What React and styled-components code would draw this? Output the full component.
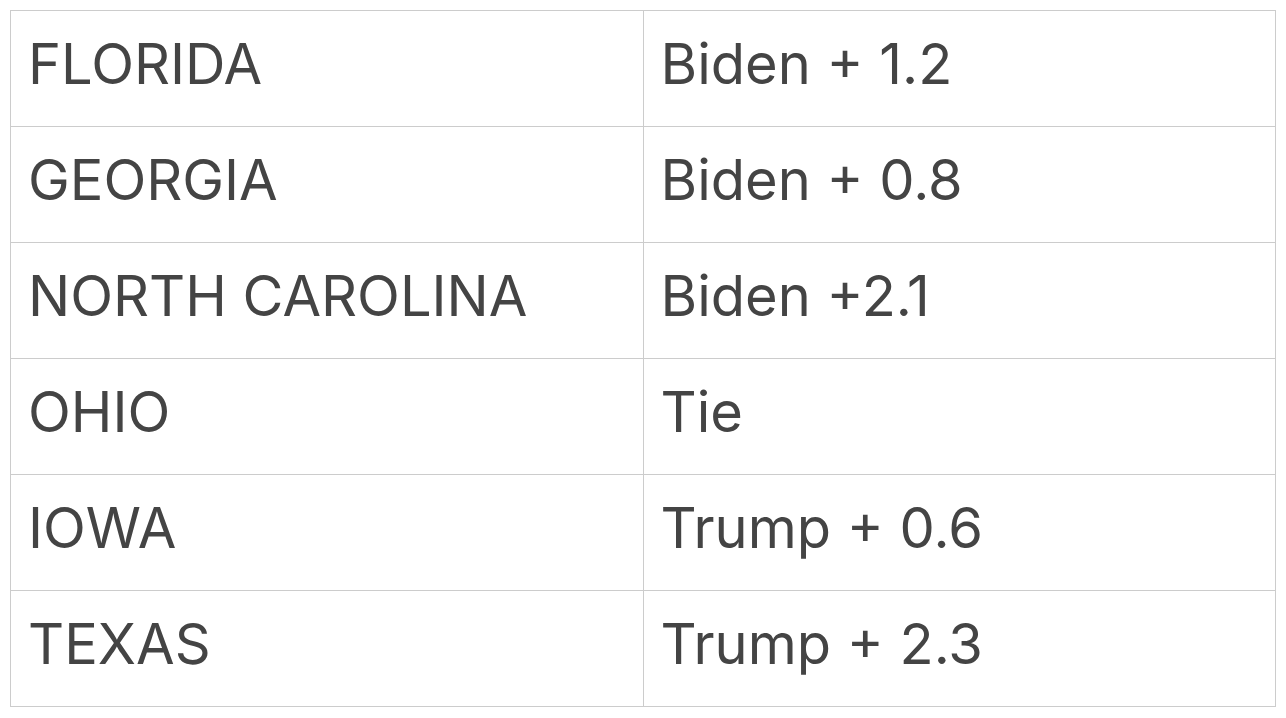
import React from "react";
import styled, { createGlobalStyle } from "styled-components";

const GlobalStyle = createGlobalStyle`
  body {
    margin: 0;
    background: #ffffff;
  }
`;

const rows = [
  ["FLORIDA", "Biden + 1.2"],
  ["GEORGIA", "Biden + 0.8"],
  ["NORTH CAROLINA", "Biden +2.1"],
  ["OHIO", "Tie"],
  ["IOWA", "Trump + 0.6"],
  ["TEXAS", "Trump + 2.3"],
];

const Page = styled.div`
  padding: 10px;
`;

const Table = styled.table`
  width: 1266px;
  border-collapse: collapse;
  table-layout: fixed;
  font-family: Inter, "Liberation Sans", sans-serif;
  color: #444444;
`;

const Cell = styled.td`
  height: 116px;
  border: 1px solid #cccccc;
  padding: 0 0 10px 17px;
  font-size: 56px;
  line-height: 1;
  vertical-align: middle;
  box-sizing: border-box;
`;

export default function App() {
  return (
    <>
      <GlobalStyle />
      <Page>
        <Table>
          <tbody>
            {rows.map(([state, margin]) => (
              <tr key={state}>
                <Cell>{state}</Cell>
                <Cell>{margin}</Cell>
              </tr>
            ))}
          </tbody>
        </Table>
      </Page>
    </>
  );
}
